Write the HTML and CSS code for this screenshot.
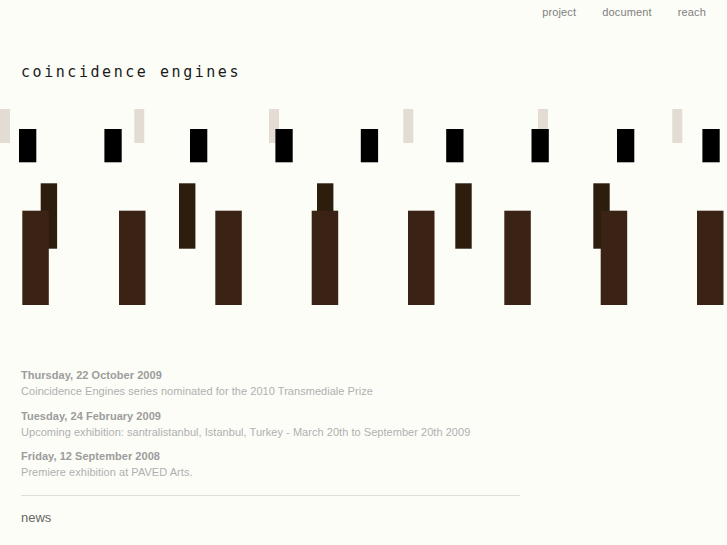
FILE: index.html
```html
<!DOCTYPE html>
<html>
<head>
<meta charset="utf-8">
<link rel="stylesheet" href="styles.css">
</head>
<body>
<nav class="nav">
  <a href="#">project</a>
  <a href="#">document</a>
  <a href="#">reach</a>
</nav>
<h1 class="title">coincidence engines</h1>
<svg class="banner" width="727" height="200" viewBox="0 105 727 200" xmlns="http://www.w3.org/2000/svg">
  <g fill="#e3dcd3">
    <rect x="0" y="109" width="10" height="34"/>
    <rect x="134.3" y="109" width="10" height="34"/>
    <rect x="269" y="109" width="10" height="34"/>
    <rect x="403.3" y="109" width="10" height="34"/>
    <rect x="538" y="109" width="10" height="34"/>
    <rect x="672.3" y="109" width="10" height="34"/>
  </g>
  <g fill="#000">
    <rect x="19" y="129" width="17.3" height="33.3"/>
    <rect x="104.4" y="129" width="17.3" height="33.3"/>
    <rect x="190" y="129" width="17.3" height="33.3"/>
    <rect x="275.4" y="129" width="17.3" height="33.3"/>
    <rect x="360.8" y="129" width="17.3" height="33.3"/>
    <rect x="446.2" y="129" width="17.3" height="33.3"/>
    <rect x="531.5" y="129" width="17.3" height="33.3"/>
    <rect x="617" y="129" width="17.3" height="33.3"/>
    <rect x="702.4" y="129" width="17.3" height="33.3"/>
  </g>
  <g fill="#2c1d0c">
    <rect x="40.7" y="183.3" width="16.4" height="65.4"/>
    <rect x="179" y="183.3" width="16.4" height="65.4"/>
    <rect x="317" y="183.3" width="16.4" height="65.4"/>
    <rect x="455.3" y="183.3" width="16.4" height="65.4"/>
    <rect x="593.3" y="183.3" width="16.4" height="65.4"/>
  </g>
  <g fill="#3a2314">
    <rect x="22.3" y="210.7" width="26.5" height="94.3"/>
    <rect x="119" y="210.7" width="26.5" height="94.3"/>
    <rect x="215.3" y="210.7" width="26.5" height="94.3"/>
    <rect x="311.7" y="210.7" width="26.5" height="94.3"/>
    <rect x="408" y="210.7" width="26.5" height="94.3"/>
    <rect x="504.3" y="210.7" width="26.5" height="94.3"/>
    <rect x="600.7" y="210.7" width="26.5" height="94.3"/>
    <rect x="697" y="210.7" width="26.5" height="94.3"/>
  </g>
</svg>
<section class="news">
  <div class="item">
    <div class="date">Thursday, 22 October 2009</div>
    <div class="text">Coincidence Engines series nominated for the 2010 Transmediale Prize</div>
  </div>
  <div class="item">
    <div class="date">Tuesday, 24 February 2009</div>
    <div class="text">Upcoming exhibition: santralistanbul, Istanbul, Turkey - March 20th to September 20th 2009</div>
  </div>
  <div class="item">
    <div class="date">Friday, 12 September 2008</div>
    <div class="text">Premiere exhibition at PAVED Arts.</div>
  </div>
  <hr class="rule">
  <div class="label">news</div>
</section>
</body>
</html>
```

FILE: styles.css
```css
html, body {
  margin: 0;
  padding: 0;
  background: #fcfdf7;
  height: 100%;
  overflow: hidden;
}
body {
  font-family: "Liberation Sans", Arial, sans-serif;
  width: 727px;
  height: 545px;
}
.nav {
  display: flex;
  justify-content: flex-end;
  gap: 26px;
  padding: 5px 21px 0 0;
  height: 17px;
  font-size: 11px;
  line-height: 14px;
  letter-spacing: 0.15px;
}
.nav a {
  color: #808080;
  text-decoration: none;
}
.title {
  margin: 0;
  padding: 40px 0 0 21px;
  font-family: "DejaVu Sans Mono", monospace;
  font-weight: normal;
  font-size: 15px;
  letter-spacing: 2.55px;
  line-height: 20px;
  color: #1a1a1a;
  height: 43px;
}
.banner {
  display: block;
  margin: 0;
}
.news {
  padding: 62px 0 0 21px;
  width: 500px;
  font-size: 11px;
  line-height: 16px;
  letter-spacing: 0.04px;
}
.item {
  margin-bottom: 8.5px;
}
.date {
  font-weight: bold;
  color: #9c9c9c;
}
.text {
  color: #b0b0b0;
}
.rule {
  border: 0;
  border-top: 1px solid #e0e0da;
  margin: 15px 0 0 0;
  width: 499px;
  height: 0;
}
.label {
  margin-top: 14px;
  font-size: 13px;
  line-height: 16px;
  letter-spacing: 0;
  color: #666;
}
```
